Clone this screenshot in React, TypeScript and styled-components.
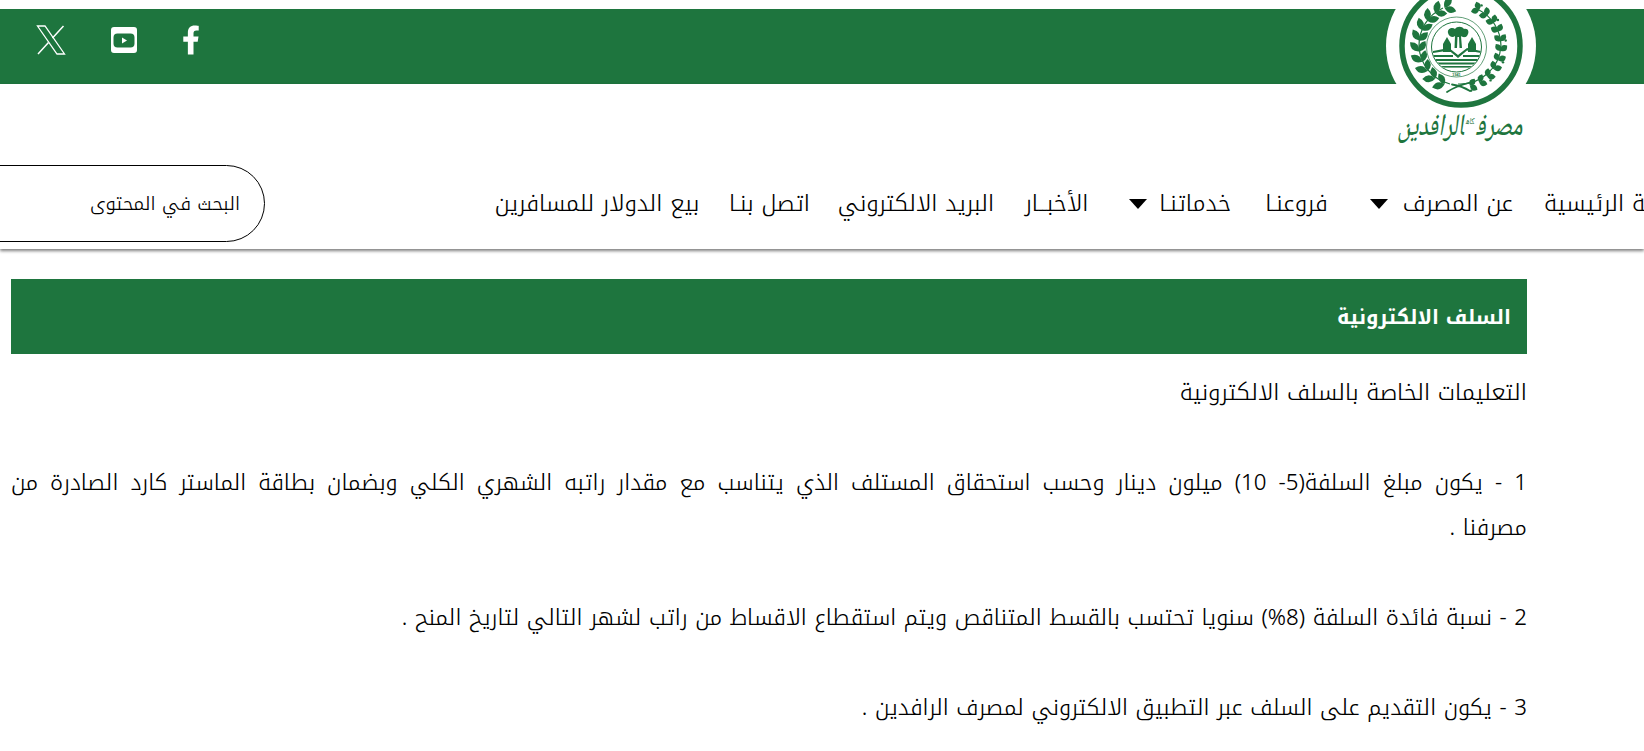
import React from 'react';
import styled, { createGlobalStyle } from 'styled-components';
import { FaFacebookF } from 'react-icons/fa';

const GREEN = '#1e753e';
const KUFI = '"Noto Kufi Arabic", "DejaVu Sans", sans-serif';

const Global = createGlobalStyle`
  html, body { margin: 0; padding: 0; background: #fff; overflow: hidden; }
  #root { width: 1644px; height: 751px; overflow: hidden; }
`;

const Page = styled.div`
  position: relative;
  width: 1644px;
  height: 751px;
  overflow: hidden;
  padding-top: 9px;
  box-sizing: border-box;
  font-family: ${KUFI};
  color: #000;
`;

const TopBar = styled.header`
  height: 75px;
  background: ${GREEN};
  display: flex;
  align-items: center;
  gap: 45px;
  padding-left: 36px;
  padding-bottom: 13px;
  box-sizing: border-box;
`;

const SocialLink = styled.a`
  display: flex;
  color: #fff;
`;

const FacebookIcon = styled(FaFacebookF)`
  width: 18px;
  height: 30px;
`;

const LogoWrap = styled.div`
  position: absolute;
  left: 1386px;
  top: 0;
  width: 150px;
`;

const LogoName = styled.div`
  position: absolute;
  left: 0;
  top: 99px;
  width: 150px;
  text-align: center;
  direction: rtl;
  white-space: nowrap;
  font-family: "Noto Naskh Arabic", "DejaVu Serif", serif;
  font-style: italic;
  font-weight: 500;
  font-size: 27px;
  line-height: 46px;
  color: ${GREEN};
  transform: scale(0.82, 1.15);
`;

const LogoMark = styled.small`
  font-size: 8px;
  vertical-align: 10px;
  margin: 0 3px;
`;

const NavBar = styled.div`
  height: 165px;
  padding-top: 81px;
  box-sizing: border-box;
  background: #fff;
  box-shadow: 0 2px 3px rgba(0, 0, 0, 0.5);
  overflow: hidden;
`;

const Nav = styled.nav`
  display: flex;
  direction: rtl;
  justify-content: flex-end;
  align-items: center;
  gap: 31px;
  height: 77px;
  margin-left: -40px;
`;

const NavItem = styled.a<{ $w?: number }>`
  display: flex;
  align-items: center;
  justify-content: center;
  gap: 8px;
  flex: none;
  width: ${p => (p.$w ? `${p.$w}px` : 'auto')};
  white-space: nowrap;
  font-size: 23px;
  font-weight: 300;
  line-height: 77px;
  color: #000;
`;

const Caret = styled.span`
  flex: none;
  width: 0;
  height: 0;
  margin-left: 8px;
  margin-right: auto;
  border-left: 9.5px solid transparent;
  border-right: 9.5px solid transparent;
  border-top: 10px solid #000;
`;

const Search = styled.input`
  flex: none;
  width: 305px;
  height: 77px;
  margin-right: 199px;
  padding: 0 24px;
  box-sizing: border-box;
  border: 1px solid #000;
  border-radius: 38.5px;
  background: #fff;
  outline: none;
  direction: rtl;
  text-align: right;
  font-family: ${KUFI};
  font-size: 19px;
  font-weight: 300;
  &::placeholder { color: #000; opacity: 1; }
`;

const Content = styled.main`
  width: 1516px;
  margin: 30px 0 0 11px;
  direction: rtl;
`;

const TitleBar = styled.div`
  height: 75px;
  padding: 0 16px;
  display: flex;
  align-items: center;
  background: ${GREEN};
  color: #fff;
  font-size: 20px;
  font-weight: 700;
`;

const Body = styled.div`
  margin-top: 16px;
  font-size: 22.3px;
  font-weight: 300;
  line-height: 45px;
  color: #000;
`;

const Para = styled.p`
  margin: 0 0 45px;
`;

const Lead = styled(Para)`
  font-size: 23px;
`;

const JustifiedLine = styled.span`
  display: block;
  text-align: justify;
  text-align-last: justify;
`;

const lens = (len: number, w: number) => `M0 0 Q${len / 2} ${-w} ${len} 0 Q${len / 2} ${w} 0 0Z`;

const along = (
  from: number,
  to: number,
  n: number,
  draw: (x: number, y: number, a: number, i: number) => React.ReactNode,
) =>
  Array.from({ length: n }, (_, i) => {
    const a = from + ((to - from) * i) / (n - 1);
    const rad = (a * Math.PI) / 180;
    return draw(74 + 41 * Math.cos(rad), 46 + 41 * Math.sin(rad), a, i);
  });

const Seal = () => (
  <svg width="150" height="121" viewBox="0 0 150 121" style={{ display: 'block', overflow: 'visible' }}>
    <circle cx="75" cy="46" r="75" fill="#fff" />
    <circle cx="75" cy="46" r="59" fill="none" stroke={GREEN} strokeWidth="5.5" />
    {/* crossed ribbons */}
    <path d="M61 92 Q70 86 84 82.5 M84 91 Q76 86 66 84.5" fill="none" stroke={GREEN} strokeWidth="1.8" strokeLinecap="round" />
    {/* laurel branch, left */}
    <path d="M64 84 A41 41 0 0 1 33 46 A41 41 0 0 1 57 8" fill="none" stroke={GREEN} strokeWidth="1.2" />
    {along(112, 248, 10, (x, y, a, i) => (
      <g key={i} fill={GREEN}>
        <path d={lens(13, 7)} transform={`translate(${x} ${y}) rotate(${a + 52})`} />
        <path d={lens(12, 6.5)} transform={`translate(${x} ${y}) rotate(${a + 128})`} />
      </g>
    ))}
    {/* olive branch, right */}
    <path d="M72 84 A41 41 0 0 0 115 46 A41 41 0 0 0 91 9" fill="none" stroke={GREEN} strokeWidth="1.2" />
    {along(-62, 76, 11, (x, y, a, i) => (
      <g key={i} fill={GREEN}>
        <path d={lens(8.5, 6)} transform={`translate(${x} ${y}) rotate(${a - 48})`} />
        <path d={lens(8.5, 6)} transform={`translate(${x} ${y}) rotate(${a - 132})`} />
        {i % 2 === 0 && <circle cx={x + 5 * Math.cos((a * Math.PI) / 180)} cy={y + 5 * Math.sin((a * Math.PI) / 180)} r="1.2" />}
      </g>
    ))}
    {/* inner seal */}
    <circle cx="70.5" cy="47" r="30" fill="#fff" stroke={GREEN} strokeWidth="0.7" />
    <circle cx="70.5" cy="47" r="25" fill="none" stroke={GREEN} strokeWidth="1" />
    <defs>
      <clipPath id="sealClip">
        <circle cx="70.5" cy="47" r="24.5" />
      </clipPath>
    </defs>
    <g clipPath="url(#sealClip)" fill={GREEN}>
      <path d="M62 33 C61 28 67 27 69 29 C71 26 76 26 78 29 C82 28 84 32 81 36 C79 38 76 37 75 36 L76 48 L73.5 48 L73 37 L71.5 37 L71 48 L68.5 48 L69 36 C67 38 63 37 62 33Z" />
      <path d="M57 44 L61 37 L65 44 L65 52 L57 52Z" />
      <path d="M82 44 L86 37 L90 44 L90 52 L82 52Z" />
      <path d="M47 51 L63 48 L72 55 L81 48 L95 51 L95 53 L81 50.5 L72 58 L63 50.5 L47 53Z" />
      <rect x="47" y="55" width="20" height="2" />
      <rect x="77" y="55" width="19" height="2" />
      <rect x="46" y="59" width="50" height="2" />
      <rect x="46" y="62.5" width="50" height="2" />
      <rect x="46" y="66" width="50" height="1.6" />
    </g>
    <text x="70.5" y="75.5" textAnchor="middle" fontFamily="Liberation Sans, sans-serif" fontSize="3.8" fontWeight="700" fill={GREEN}>1941</text>
  </svg>
);

const Logo = () => (
  <LogoWrap>
    <Seal />
    <LogoName>
      مصرف<LogoMark>كاه</LogoMark>الرافدين
    </LogoName>
  </LogoWrap>
);

const XIcon = () => (
  <svg width="30" height="30" viewBox="0 0 30 30" fill="none" stroke="#fff">
    <path d="M1.5 1 H9 L28.5 29 H21 Z" strokeWidth="1.3" />
    <path d="M27.5 1 L16.5 13 M12.5 17.5 L2 29" strokeWidth="1.5" />
  </svg>
);

const YoutubeIcon = () => (
  <svg width="26" height="26" viewBox="0 0 26 26">
    <path
      fill="#fff"
      fillRule="evenodd"
      d="M3 0 H23 A3 3 0 0 1 26 3 V23 A3 3 0 0 1 23 26 H3 A3 3 0 0 1 0 23 V3 A3 3 0 0 1 3 0Z M6.5 6.5 A4 4 0 0 0 2.5 10.5 V16.5 A4 4 0 0 0 6.5 20.5 H19.5 A4 4 0 0 0 23.5 16.5 V10.5 A4 4 0 0 0 19.5 6.5Z"
    />
    <path fill="#fff" d="M11 10.5 L16 13.5 L11 16.5Z" />
  </svg>
);

export default function App() {
  return (
    <Page>
      <Global />
      <TopBar>
        <SocialLink><XIcon /></SocialLink>
        <SocialLink><YoutubeIcon /></SocialLink>
        <SocialLink><FacebookIcon /></SocialLink>
      </TopBar>
      <NavBar>
        <Nav>
          <NavItem>الصفحة الرئيسية</NavItem>
          <NavItem $w={151}>عن المصرف<Caret /></NavItem>
          <NavItem $w={69}>فروعنـا</NavItem>
          <NavItem $w={110}>خدماتنـا<Caret /></NavItem>
          <NavItem $w={67}>الأخبــار</NavItem>
          <NavItem $w={152}>البريد الالكتروني</NavItem>
          <NavItem $w={79}>اتصل بنـا</NavItem>
          <NavItem $w={204}>بيع الدولار للمسافرين</NavItem>
          <Search placeholder="البحث في المحتوى" />
        </Nav>
      </NavBar>
      <Content>
        <TitleBar>السلف الالكترونية</TitleBar>
        <Body>
          <Lead>التعليمات الخاصة بالسلف الالكترونية</Lead>
          <Para>
            <JustifiedLine>1 - يكون مبلغ السلفة(5- 10) ميلون دينار وحسب استحقاق المستلف الذي يتناسب مع مقدار راتبه الشهري الكلي وبضمان بطاقة الماستر كارد الصادرة من</JustifiedLine>
            مصرفنا .
          </Para>
          <Para>2 - نسبة فائدة السلفة (8%) سنويا تحتسب بالقسط المتناقص ويتم استقطاع الاقساط من راتب لشهر التالي لتاريخ المنح .</Para>
          <Para>3 - يكون التقديم على السلف عبر التطبيق الالكتروني لمصرف الرافدين .</Para>
        </Body>
      </Content>
      <Logo />
    </Page>
  );
}
